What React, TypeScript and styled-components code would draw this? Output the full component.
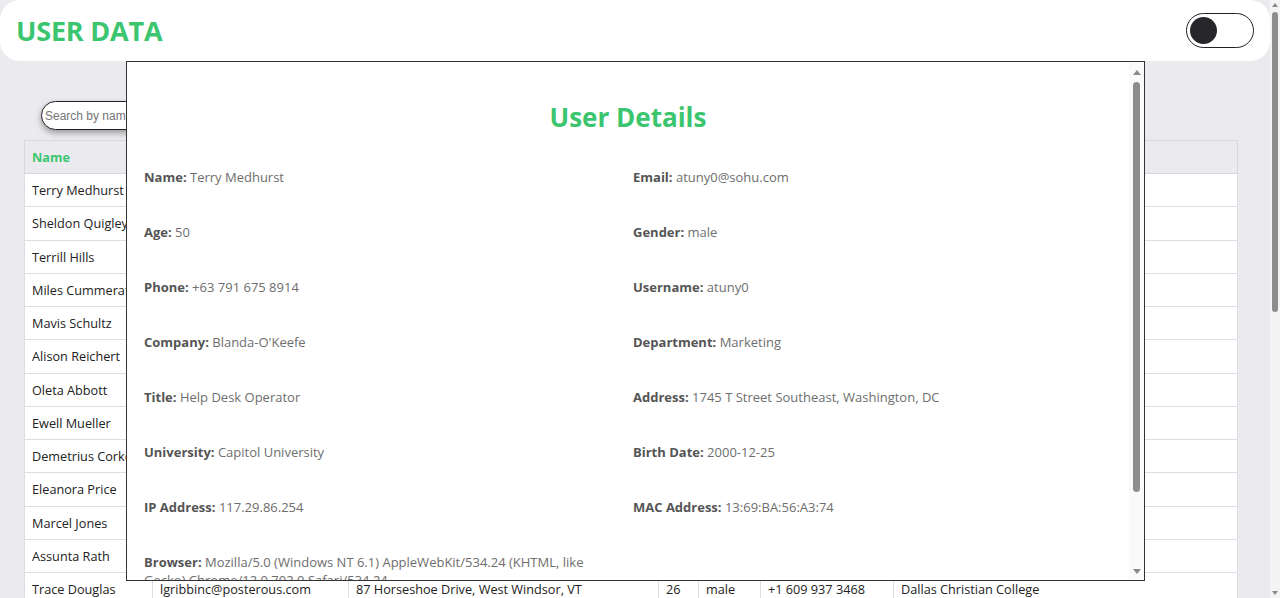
import React from "react";
import styled, { createGlobalStyle } from "styled-components";

const GREEN = "#3bc56e";

const GlobalStyle = createGlobalStyle`
  html, body { background: #ebebef; }
  body {
    margin: 0;
    padding-right: 10px;
    font-family: "Open Sans", "Noto Sans", sans-serif;
  }
`;

const Header = styled.header`
  height: 61px;
  background: #fff;
  border-radius: 20px;
  display: flex;
  align-items: center;
  justify-content: space-between;
  padding: 0 16px;
  box-sizing: border-box;
`;

const Title = styled.h1`
  margin: 0;
  font-size: 27px;
  font-weight: 700;
  color: ${GREEN};
  letter-spacing: -0.2px;
`;

const Toggle = styled.button`
  width: 68px;
  height: 35px;
  border: 1px solid #222;
  border-radius: 18px;
  background: #fff;
  padding: 0 3px;
  display: flex;
  align-items: center;
  box-sizing: border-box;
  cursor: pointer;
`;

const Knob = styled.span`
  width: 27px;
  height: 27px;
  border-radius: 50%;
  background: #27272b;
`;

const Main = styled.main`
  padding: 40px 32px 40px 24px;
`;

const SearchRow = styled.div`
  padding-left: 17px;
  margin-bottom: 10px;
`;

const SearchInput = styled.input`
  width: 200px;
  height: 29px;
  box-sizing: border-box;
  border: 1px solid #222;
  border-radius: 15px;
  padding: 0 3px;
  font-family: "Liberation Sans", Arial, sans-serif;
  font-size: 12px;
  box-shadow: 0 3px 6px rgba(0, 0, 0, 0.35);
  outline: none;
  &::placeholder { color: #757575; }
`;

const Table = styled.table`
  width: 100%;
  border-collapse: collapse;
  table-layout: fixed;
  background: #fff;
  font-size: 12.7px;
  color: #222;
`;

const Th = styled.th`
  background: #ebebef;
  color: ${GREEN};
  font-weight: 700;
  text-align: left;
  padding: 0 7px;
  height: 33px;
  border: 1px solid #d8d8dc;
  box-sizing: border-box;
`;

const Td = styled.td`
  padding: 0 7px;
  height: 33.25px;
  border: 1px solid #dedee2;
  white-space: nowrap;
  overflow: hidden;
  box-sizing: border-box;
`;

/* Page scrollbar drawn over the right edge of the viewport */
const PageScrollbar = styled.div`
  position: fixed;
  top: 0;
  right: 0;
  width: 10px;
  height: 100vh;
  background: #f4f4f4;
  display: flex;
  flex-direction: column;
  align-items: center;
  padding: 3px 0 3px;
  box-sizing: border-box;
`;

const ArrowUp = styled.span<{ $size: number }>`
  width: 0;
  height: 0;
  border-left: ${(p) => p.$size}px solid transparent;
  border-right: ${(p) => p.$size}px solid transparent;
  border-bottom: ${(p) => p.$size + 1}px solid #8a8a8a;
  flex-shrink: 0;
`;

const ArrowDown = styled.span<{ $size: number }>`
  width: 0;
  height: 0;
  border-left: ${(p) => p.$size}px solid transparent;
  border-right: ${(p) => p.$size}px solid transparent;
  border-top: ${(p) => p.$size + 1}px solid #8a8a8a;
  flex-shrink: 0;
  margin-top: auto;
`;

const Thumb = styled.span<{ $width: number; $height: number; $gap: number }>`
  width: ${(p) => p.$width}px;
  height: ${(p) => p.$height}px;
  margin-top: ${(p) => p.$gap}px;
  border-radius: ${(p) => p.$width / 2}px;
  background: #8d8d8d;
  flex-shrink: 0;
`;

const Modal = styled.div`
  position: fixed;
  top: 61px;
  left: 126px;
  width: 1019px;
  height: 520px;
  box-sizing: border-box;
  border: 1px solid #333;
  background: #fff;
  display: flex;
  overflow: hidden;
`;

const ModalBody = styled.div`
  flex: 1;
  min-width: 0;
  overflow: hidden;
  padding: 0 17px;
`;

const ModalScrollbar = styled.div`
  width: 15px;
  flex-shrink: 0;
  background: #fafafa;
  display: flex;
  flex-direction: column;
  align-items: center;
  padding: 8px 0 6px;
  box-sizing: border-box;
`;

const ModalTitle = styled.h2`
  margin: 37px 0 33px;
  text-align: center;
  font-size: 26px;
  line-height: 36px;
  font-weight: 700;
  color: ${GREEN};
`;

const DetailGrid = styled.div`
  display: grid;
  grid-template-columns: 1fr 1fr;
  column-gap: 30px;
  row-gap: 37px;
  padding-right: 20px;
`;

const Detail = styled.p`
  margin: 0;
  font-size: 13px;
  line-height: 18px;
  color: #6e6e6e;
`;

const Label = styled.strong`
  color: #555;
  font-weight: 700;
`;

type User = [string, string, string, number, string, string, string];

const users: User[] = [
  ["Terry Medhurst", "atuny0@sohu.com", "1745 T Street Southeast, Washington, DC", 50, "male", "+63 791 675 8914", "Capitol University"],
  ["Sheldon Quigley", "hbingley1@plala.or.jp", "6007 Applegate Lane, Louisville, KY", 28, "male", "+7 813 117 7139", "Stavropol State Technical University"],
  ["Terrill Hills", "rshawe2@51.la", "560 Penstock Drive, Grass Valley, CA", 38, "male", "+63 739 292 7942", "University of Cagayan Valley"],
  ["Miles Cummerata", "yraigatt3@nature.com", "150 Carter Street, Manchester, CT", 49, "male", "+86 461 145 4186", "Shenyang Pharmaceutical University"],
  ["Mavis Schultz", "kmeus4@upenn.edu", "2721 Lindsay Avenue, Louisville, KY", 38, "male", "+372 285 771 1911", "Estonian University of Life Sciences"],
  ["Alison Reichert", "jtreleven5@nhs.uk", "18 Densmore Drive, Essex, VT", 21, "female", "+351 527 735 3642", "Universidade da Beira Interior"],
  ["Oleta Abbott", "dpettegre6@columbia.edu", "637 Britannia Drive, Vallejo, CA", 31, "female", "+62 640 802 7111", "Institut Sains dan Teknologi Nasional"],
  ["Ewell Mueller", "ggude7@chron.com", "5601 West Crocus Drive, Glendale, AZ", 29, "male", "+86 946 676 4137", "Wenzhou Medical College"],
  ["Demetrius Corkery", "nloiterton8@aol.com", "5403 Illinois Avenue, Nashville, TN", 22, "male", "+86 356 590 9727", "Beijing Normal University"],
  ["Eleanora Price", "umcgourty9@jalbum.net", "8821 West Myrtle Avenue, Glendale, AZ", 37, "female", "+60 184 408 2910", "Universiti Malaysia Sabah"],
  ["Marcel Jones", "acharlota@liveinternet.ru", "2203 7th Street Road, Louisville, KY", 39, "male", "+967 253 210 0344", "Hodeidah University"],
  ["Assunta Rath", "rhallawellb@dropbox.com", "6463 Vrain Street, Arvada, CO", 42, "female", "+380 962 542 6549", "National University of Ostroh Academy"],
  ["Trace Douglas", "lgribbinc@posterous.com", "87 Horseshoe Drive, West Windsor, VT", 26, "male", "+1 609 937 3468", "Dallas Christian College"],
  ["Enoch Lynch", "mturleyd@tumblr.com", "60 Desousa Drive, Manchester, CT", 21, "male", "+94 912 100 5118", "University of Peradeniya"],
  ["Jeanne Halvorson", "kminchelle@qq.com", "4 Old Colony Way, Yarmouth, MA", 26, "female", "+86 581 108 7855", "Dalian Medical University"],
  ["Trycia Fadel", "dpierrof@vimeo.com", "314 South 17th Street, Nashville, TN", 41, "female", "+420 833 708 0340", "Charles University in Prague"],
  ["Bradford Prohaska", "vcholdcroftg@ucoz.com", "1649 Timberridge Court, Fayetteville, AR", 43, "male", "+420 874 628 3710", "University of Pardubice"],
  ["Arely Skiles", "sberminghamh@chron.com", "5461 West Shades Valley Drive, Montgomery, AL", 41, "male", "+55 886 766 8617", "Universidade Federal de Uberlandia"],
  ["Gust Purdy", "bleveragei@so-net.ne.jp", "629 Debbie Drive, Nashville, TN", 46, "male", "+86 886 889 0707", "Changchun University"],
  ["Lenna Renner", "aeatockj@psu.edu", "22572 Toreador Drive, Salinas, CA", 41, "female", "+1 904 560 6716", "Ecole Nationale Superieure"],
  ["Doyle Ernser", "ckensleyk@pen.io", "1508 Lennox Drive, Manchester, CT", 23, "male", "+86 634 419 6839", "Xinjiang University"],
  ["Tressa Weber", "froachel@howstuffworks.com", "5108 Franklin Street, Montgomery, AL", 41, "female", "+34 517 104 6248", "Universidad Pontificia Comillas"],
  ["Felicity O'Reilly", "beykelhofm@wikispaces.com", "5306 Ritchie Highway, Baltimore, MD", 46, "female", "+63 919 564 1690", "Central Mindanao University"],
  ["Jocelyn Schuster", "brickeardn@fema.gov", "1407 Walden Court, Crofton, MD", 19, "male", "+86 522 526 8686", "Xi'an Academy of Fine Art"],
  ["Edwina Ernser", "dfundello@amazon.co.jp", "2115 Portland Avenue, Nashville, TN", 21, "female", "+86 376 986 8945", "Xi'an Eurasia University"],
  ["Griffin Braun", "lgherardinip@furl.net", "8376 Albacore Drive, Pasadena, MD", 35, "male", "+62 511 790 0161", "Universitas Negeri Jakarta"],
  ["Piper Schowalter", "fokillq@amazon.co.jp", "3113 Kinsey Drive, Annapolis, MD", 47, "female", "+60 785 960 7918", "Sunway University College"],
  ["Kody Terry", "xisherwoodr@ask.com", "2721 Lindsay Avenue, Louisville, KY", 28, "male", "+81 859 545 8951", "Kanazawa Institute of Technology"],
  ["Macy Greenfelder", "jissetts@hostgator.com", "81 Seaton Place Northwest, Washington, DC", 45, "female", "+81 915 649 2384", "Fukui Prefectural University"],
  ["Maurine Stracke", "kdulyt@umich.edu", "8398 Lakeview Avenue, Manchester, CT", 31, "female", "+48 143 590 6847", "Poznan School of Banking"],
];

const columns: [string, number | undefined][] = [
  ["Name", 128],
  ["Email", 196],
  ["Address", 310],
  ["Age", 40],
  ["Gender", 62],
  ["Phone", 133],
  ["University", undefined],
];

const details: [string, string][] = [
  ["Name", "Terry Medhurst"],
  ["Email", "atuny0@sohu.com"],
  ["Age", "50"],
  ["Gender", "male"],
  ["Phone", "+63 791 675 8914"],
  ["Username", "atuny0"],
  ["Company", "Blanda-O'Keefe"],
  ["Department", "Marketing"],
  ["Title", "Help Desk Operator"],
  ["Address", "1745 T Street Southeast, Washington, DC"],
  ["University", "Capitol University"],
  ["Birth Date", "2000-12-25"],
  ["IP Address", "117.29.86.254"],
  ["MAC Address", "13:69:BA:56:A3:74"],
  ["Browser", "Mozilla/5.0 (Windows NT 6.1) AppleWebKit/534.24 (KHTML, like Gecko) Chrome/12.0.702.0 Safari/534.24"],
];

export default function App() {
  return (
    <>
      <GlobalStyle />
      <Header>
        <Title>USER DATA</Title>
        <Toggle aria-label="Toggle theme">
          <Knob />
        </Toggle>
      </Header>
      <Main>
        <SearchRow>
          <SearchInput placeholder="Search by name" />
        </SearchRow>
        <Table>
          <colgroup>
            {columns.map(([name, w]) => (
              <col key={name} style={w ? { width: w } : undefined} />
            ))}
          </colgroup>
          <thead>
            <tr>
              {columns.map(([name]) => (
                <Th key={name}>{name}</Th>
              ))}
            </tr>
          </thead>
          <tbody>
            {users.map((u) => (
              <tr key={u[1]}>
                {u.map((v, i) => (
                  <Td key={i}>{v}</Td>
                ))}
              </tr>
            ))}
          </tbody>
        </Table>
      </Main>
      <Modal>
        <ModalBody>
          <ModalTitle>User Details</ModalTitle>
          <DetailGrid>
            {details.map(([k, v]) => (
              <Detail key={k}>
                <Label>{k}:</Label> {v}
              </Detail>
            ))}
          </DetailGrid>
        </ModalBody>
        <ModalScrollbar>
          <ArrowUp $size={4} />
          <Thumb $width={7} $height={410} $gap={7} />
          <ArrowDown $size={4} />
        </ModalScrollbar>
      </Modal>
      <PageScrollbar>
        <ArrowUp $size={3} />
        <Thumb $width={6} $height={300} $gap={5} />
        <ArrowDown $size={3} />
      </PageScrollbar>
    </>
  );
}
